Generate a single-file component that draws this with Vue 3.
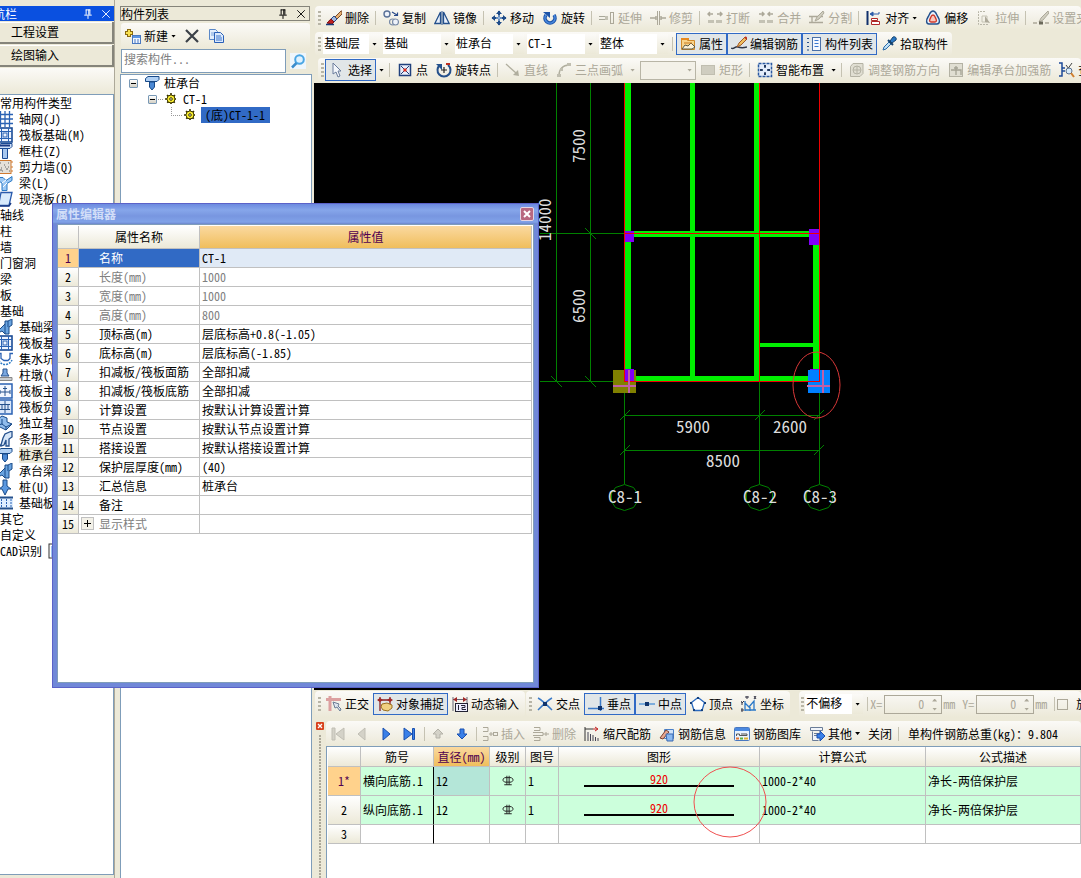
<script setup>
import { ref } from 'vue'

const icons = {
  brush: '<path d="M15 1 9 7l2 2 5-5V1z" fill="#e8b070" stroke="#7a4a2a"/><path d="M8 6 5 9l3 3 3-3z" fill="#9fb8e0" stroke="#2a4a8a"/><path d="M5 9c-2 1-2 3-4 4l5 1 2-2z" fill="#c02020" stroke="#801010"/><path d="M0 14.500h8" stroke="#1a3a7a" stroke-width="1.500"/>',
  copy: '<circle cx="4" cy="4" r="3" fill="#eef2fa" stroke="#5a7298" stroke-width="1.400"/><circle cx="9.500" cy="12" r="3" fill="none" stroke="#7a8ca8" stroke-width="1.200"/><circle cx="12.500" cy="12" r="3" fill="#eef2fa" stroke="#7a8ca8" stroke-width="1.200"/><path d="M9 2l5 3M14.500 2.500V5.500H11" stroke="#2a4a8a" fill="none" stroke-width="1.200"/>',
  mirror: '<path d="M6.500 2v11.500H.8zM9.500 2v11.500h5.700z" fill="#e8f0fc" stroke="#24508c" stroke-width="1.300"/><path d="M8 1v14" stroke="#24508c"/>',
  move: '<path d="M8 1v14M1 8h14" stroke="#1d4a88" stroke-width="2"/><path d="M5 4l3-3.500L11 4zM5 12l3 3.500 3-3.500zM4 5L.5 8 4 11zM12 5l3.500 3-3.500 3z" fill="#1d4a88"/><path d="M8 5v6M5 8h6" stroke="#b8d4f4"/>',
  rotate: '<path d="M4 5a5 5 0 1 0 8 0" fill="none" stroke="#1d54a8" stroke-width="3.600"/><path d="M4 5a5 5 0 1 0 8 0" fill="none" stroke="#4a8ae0" stroke-width="1.500"/><path d="M1 2h7v6z" fill="#1d54a8"/>',
  extend: '<path d="M0 6.500h6M0 9.500h6" stroke="#a8a89a" fill="none"/><rect x="6" y="6" width="3" height="4" fill="#c4c2b4"/><path d="M11.500 2v12M14.500 2v12M11 2.500h4M11 13.500h4" stroke="#aca899"/>',
  trim: '<path d="M7.500 1v14M9.500 1v14" stroke="#aca899"/><path d="M0 8h6M11 8h5M6 6v4M11 6v4" stroke="#aca899" stroke-width="1.500"/>',
  breakIcon: '<path d="M1 10h6v3H1zM9 10h6v3H9z" fill="#c4c2b4"/><path d="M6 4H1m2-2L1 4l2 2M10 4h5m-2-2 2 2-2 2" stroke="#aca899" fill="none" stroke-width="1.500"/>',
  merge: '<path d="M1 10h6v3H1zM9 10h6v3H9z" fill="#c4c2b4"/><path d="M1 4h5M4 2l2 2-2 2M15 4h-5m2-2-2 2 2 2" stroke="#aca899" fill="none" stroke-width="1.500"/>',
  split: '<path d="M0 6.500h14M0 12.500h14M3 6v6" stroke="#aca899" fill="none" stroke-width="1.300"/><path d="M14 1 8 7l-2 4 4-2 5-6z" fill="#d0cec0" stroke="#aca899"/>',
  align: '<path d="M1.500 1v14" stroke="#10306c" stroke-width="2"/><path d="M5 4h8m0 0V2M7 2 4 4l3 2z" stroke="#2c5caa" fill="#2c5caa"/><path d="M5.500 8.500h6v2h-6zM5.500 11.500h8v3h-8z" fill="#fff" stroke="#b02828"/>',
  offset: '<path d="M8 1c3 0 3 3 5 6s2 7-1 7H4c-3 0-3-4-1-7S5 1 8 1z" fill="#e4eefa" stroke="#24508c" stroke-width="1.400"/><path d="M8 5c2 0 2 2 3 4s0 3-1 3H6c-1 0-2-1-1-3s1-4 3-4z" fill="#f8c8c0" stroke="#d03a2a" stroke-width="1.400"/>',
  stretch: '<path d="M9 1.500H2.500v13H13" fill="none" stroke="#b8b6a8" stroke-dasharray="2 1"/><path d="M6 6h5v6H6z" fill="none" stroke="#c4c2b4"/><path d="M9 6l5 7-5-1z" fill="#aca899"/>',
  setPen: '<path d="M15 1 8 8l-2 4 4-2 6-7z" fill="#d0cec0" stroke="#aca899"/><path d="M0 13h4M12 13h4" stroke="#aca899" stroke-width="1.500"/><path d="M6 13h4" stroke="#6a685a" stroke-width="3"/>',
  props: '<path d="M1.500 2.500h5l1 2h7v9h-13z" fill="#f9d48a" stroke="#d08a2a"/><path d="M1 3h8" stroke="#e88a20" stroke-width="2"/><path d="M2 13l3-4 3 1 3-3 4 4-3 2z" fill="#fdf2d8" stroke="#5a5a48"/><path d="M4 7h8" stroke="#c87a20"/>',
  editBar: '<path d="M0 12c3 2 4-2 7-1s5 1 9 0" fill="none" stroke="#303848" stroke-width="1.500"/><path d="M14 1 8 7l-2 4 4-2 6-6z" fill="#f0c060" stroke="#a05a28"/><path d="M14 1l2 2" stroke="#c03020" stroke-width="2"/>',
  listPanel: '<path d="M1 2.500h3M1 6.500h3M1 10.500h3M1 14h3" stroke="#28508c" stroke-dasharray="2 1"/><rect x="6.500" y="1.500" width="8" height="13" fill="#f4f8ff" stroke="#4a70a8"/><path d="M8.500 4.500h4M8.500 7.500h4M8.500 10.500h4" stroke="#3a78d0"/>',
  picker: '<path d="M2 14 3 11 8 6l2 2-5 5z" fill="#bfe0f6" stroke="#2a6aa8"/><path d="M7 4l5 5" stroke="#14406c" stroke-width="2"/><path d="M9 5l3-4c2-1 4 1 3 3l-4 3z" fill="#2a78c4" stroke="#14406c"/>',
  cursor: '<path d="M4 1v11l3-2 2 5 2-1-2-5h3z" fill="#f4f7fc" stroke="#6a7c9c"/>',
  point: '<path d="M2.500 2.500h11v11h-11z" fill="#e8eefa" stroke="#20407c" stroke-width="1.500"/><path d="M4 4l8 8M12 4l-8 8" stroke="#203c78"/><path d="M6.500 6.500h3v3h-3z" fill="#e03020"/>',
  rotPoint: '<path d="M4 3a6.500 6.500 0 1 0 8 0" fill="none" stroke="#24508c" stroke-width="2"/><path d="M0 2h6v6z" fill="#24508c"/><path d="M8 5v6M5 8h6" stroke="#222" stroke-width="1.200"/><path d="M10 2h4" stroke="#c03020" stroke-width="2"/>',
  line: '<path d="M1 2l10 9" stroke="#b0ae9e" stroke-width="1.300"/><path d="M14 14l-6-1 5-5z" fill="#b0ae9e"/>',
  arc: '<path d="M3 13C3 7 7 3 13 3" fill="none" stroke="#b0ae9e" stroke-width="1.300"/><path d="M1 12h4v3H1zM4 6h3v3H4zM11 1h4v3h-4z" fill="#c0beb0"/>',
  rect: '<rect x="1.500" y="3.500" width="13" height="9" fill="#cfcdc0" stroke="#c0beb0"/>',
  smart: '<rect x="1.500" y="1.500" width="13" height="13" fill="#e4edfa" stroke="#2a58a0" stroke-width="1.500" stroke-dasharray="3 1"/><path d="M8 3v3M8 10v3M3 8h3M10 8h3M7 4h2M7 12h2M4 7v2M12 7v2" stroke="#102850" stroke-width="1.300"/>',
  adjust: '<path d="M1.500 4.500 4 1.500h10v10l-3 3h-9.500z" fill="#e0ded2" stroke="#b4b2a4"/><circle cx="8" cy="8" r="4" fill="none" stroke="#b4b2a4"/><path d="M8 4v8M4 8h8" stroke="#b4b2a4"/>',
  capBar: '<rect x="1.500" y="1.500" width="13" height="13" fill="#e0ded2" stroke="#b4b2a4"/><path d="M3 8h10v5M8 4v9M6 6h4" fill="none" stroke="#a4a294" stroke-width="1.300"/>',
  inspect: '<path d="M0 1h3v5h3M0 14h3V9h3M3 6v3" fill="none" stroke="#1d4a98" stroke-width="1.500"/><path d="M13 1 8 8M7 3l3 4" stroke="#444"/><circle cx="10" cy="9" r="3" fill="#d8ecfa" stroke="#5a7090"/><path d="M12 11l3 4" stroke="#d08030" stroke-width="2"/>',
  ortho: '<path d="M0 3.500h15M4 0v15" stroke="#dca0a0" stroke-width="3"/><path d="M7 6l2 6 2-1 3 4 1-2-3-3 1-2z" fill="#dfe6f0" stroke="#6a7c94"/>',
  snap: '<path d="M3 1v14M13 1v8M1 4h13" stroke="#8a2020" stroke-width="1.300"/><path d="M0 4l3-2 3 2-3 2zM10 4l3-2 3 2-3 2z" fill="#a02828"/><path d="M5 8l5-1 5 2v3l-4 3-5-1-2-3z" fill="#f0d080" stroke="#9a7020"/>',
  dynInput: '<path d="M1 1v14M15 1v6M1 3.500h14" stroke="#667"/><path d="M5 1v5L1 3.500zM11 1v5l4-2.500z" fill="#a02828"/><rect x="3.500" y="7.500" width="12" height="8" fill="#eef" stroke="#223"/><path d="M6.500 9v5M9 9.500h4v2h-3v2h4" fill="none" stroke="#223"/>',
  cross: '<path d="M1 2c4 2 10 8 14 12M15 2C11 4 5 10 1 14" fill="none" stroke="#3a7ac8" stroke-width="1.500"/><rect x="6" y="6" width="4" height="4" fill="#10346c"/>',
  perp: '<path d="M12.500 1v14M0 12.500h16" stroke="#3a7ac8" stroke-width="1.500"/><rect x="10" y="10" width="4" height="4" fill="#10346c"/>',
  mid: '<path d="M0 8h16" stroke="#5a9ad8" stroke-width="1.600"/><rect x="6" y="6" width="4" height="4" fill="#10346c"/>',
  vertex: '<path d="M8 1.500l6.500 5-2.500 8H4L1.500 6.500z" fill="#fff" stroke="#2a6ac0" stroke-width="1.300"/><path d="M7 1h2v2H7zM0 6h2v2H0zM14 6h2v2h-2zM3 13h2v2H3zM11 13h2v2h-2z" fill="#14407c"/>',
  coord: '<path d="M4 5v10M4 14h11M4 7l4 4 5-6v9M9 11v4" fill="none" stroke="#2a78c8" stroke-width="1.300"/><path d="M5 0h2v2H5zM13 0l2 3m0-3-2 3M0 5l1 2 2-2M1 7v2M0 13h2v2H0z" stroke="#334" fill="none"/>',
  first: '<path d="M2 2h3v12H2zM14 2v12L6 8z" fill="#d4d2c8" stroke="#c0beb4"/>',
  prev: '<path d="M11 2v12L4 8z" fill="#d4d2c8" stroke="#c0beb4"/>',
  next: '<path d="M5 2v12l7-6z" fill="#3a80e8" stroke="#1a50b0"/>',
  last: '<path d="M2 2v12l8-6z" fill="#3a80e8" stroke="#1a50b0"/><path d="M10.500 2.500h2v11h-2z" fill="#3a80e8" stroke="#1a50b0"/>',
  up: '<path d="M8 3 3 8h3v4h4V8h3z" fill="#d4d2c8" stroke="#b4b2a8"/>',
  down: '<path d="M8 13 3 8h3V3h4v5h3z" fill="#3a80e8" stroke="#1a50b0"/>',
  insertRow: '<path d="M1 1.500h5v4H1M1 10.500h5v4H1M7 8h4M9 6v4" fill="none" stroke="#aca899"/><rect x="11.500" y="6.500" width="4" height="3" fill="none" stroke="#aca899"/>',
  deleteRow: '<path d="M1 1.500h6v3H1M1 11.500h6v3H1M0 6.500h10v3H0M10 8h6M13 6v4" fill="none" stroke="#aca899"/>',
  scale: '<path d="M1 1v14M1 3h8" stroke="#333"/><path d="M9 3h4m-2-2 3 2-3 2" stroke="#c02020" fill="none"/><path d="M4 6v9M6.500 8v7M9 9v6M11.500 11v4M14 12v3" stroke="#445"/>',
  info: '<path d="M5.500 3.500h9v9h-9z" fill="#cfe2fa" stroke="#4a80c8"/><path d="M1 12l6-8 3 2-6 7z" fill="#e8a890" stroke="#7a4030"/><path d="M7 8h7v7H8z" fill="#8ab8f0" stroke="#3a68b0"/>',
  library: '<rect x=".5" y="1.500" width="15" height="13" rx="1" fill="#eaf2fd" stroke="#4a78c0"/><path d="M1 3.500h14" stroke="#4a88e0" stroke-width="3"/><path d="M2.500 10V8h3v1.500H13V8H7" fill="none" stroke="#555"/><path d="M2 12.500h3" stroke="#e07030" stroke-width="2"/><path d="M6 12.500h3" stroke="#58b048" stroke-width="2"/><path d="M10 12.500h4" stroke="#e0b030" stroke-width="2"/>',
  other: '<path d="M1.500 1.500h12v3h-12zM3.500 5.500v9h6M5 7.500h6M5 9.500h3" fill="#f0f4fa" stroke="#6a7c98"/><path d="M8 8h3V5l5 5-5 5v-3H8z" fill="#3a80e8" stroke="#1a50b0"/>',
  create: '<path d="M4 1v8M0 5h8" stroke="#8a6a10" stroke-width="4"/><path d="M4 2v6M1 5h6" stroke="#f8e050" stroke-width="2"/><rect x="7.500" y="7.500" width="8" height="8" fill="#eef5ff" stroke="#4a78c0"/><path d="M8 9h7" stroke="#5a94e4" stroke-width="2"/><path d="M9 12h2M12 12h2M9 14h2M12 14h2" stroke="#4a78c0"/>',
  remove: '<path d="M2 2l12 12M14 2 2 14" stroke="#3c4148" stroke-width="2.200"/>',
  duplicate: '<path d="M1.500 1.500h6l2 2v8h-8z" fill="#e4eefc" stroke="#5a88c8"/><path d="M3 5h4M3 7h4" stroke="#7aa4dc"/><path d="M6.500 4.500h6l3 3v7h-9z" fill="#dbe9fc" stroke="#2a60b8"/><path d="M8 8h5M8 10h6M8 12h6" stroke="#3a74cc"/>',
  search: '<rect width="16" height="16" fill="#eef6fc"/><circle cx="9.500" cy="6.500" r="4.300" fill="#dff2ff" stroke="#4aa6e4" stroke-width="2"/><path d="M6.500 10 2 14.500" stroke="#3a8ccc" stroke-width="2.500"/>',
  pin: '<path d="M5 2.500h6M5.500 2v7M9 2v7M10.500 2v7M3 9.500h10M8 10v4.500" stroke="currentColor" stroke-width="1.300" fill="none"/>',
  close: '<path d="M3 3l10 10M13 3 3 13" stroke="currentColor" stroke-width="1.200"/>',
  grid: '<path d="M0 3.500h16M0 8h16M0 12.500h16M3.500 0v16M8 0v16M12.500 0v16" stroke="#2a62b4" stroke-width="1.300"/>',
  raft: '<rect x="1" y="1" width="14" height="14" fill="#eef4ff" stroke="#1a4a94" stroke-width="1.600"/><path d="M1 4.500h14M1 11.500h14M4.500 1v14M11.500 1v14" stroke="#2a62b4"/><rect x="6" y="6" width="4" height="4" fill="none" stroke="#2a62b4"/>',
  column: '<path d="M1.500 2.500 4 .5h11v3L13 5.500H1.500z" fill="#cfe0f8" stroke="#1a4a94"/><path d="M5.500 5.500h5v10h-5z" fill="#a8c8f0" stroke="#1a4a94"/><path d="M1 2.500h12" stroke="#1a3a84" stroke-width="2"/>',
  wall: '<rect x="1" y="1.500" width="13" height="13" fill="#e4e0d8" stroke="#d07a30"/><path d="M3 4h1M7 6h1M11 4h1M4 9h1M9 10h2M5 12h1M12 12h1M8 8h1M3 11h2M11 8h1" stroke="#666"/><path d="M14 3h2M14 8h2M14 12h2" stroke="#d07a30"/>',
  beam: '<path d="M0 2.500h6l3 3 6-4v4l-5 3v7H5V8L0 5z" fill="#9cc8f4" stroke="#2a78c4"/><path d="M5 8l4-3M6 12l4-4" stroke="#fff"/>',
  slab: '<path d="M4 1.500h11l-3 13H1.500z" fill="#d8eafc" stroke="#2a5aac" stroke-width="1.300"/><path d="M1 15h11l2-3" stroke="#1a3a84" fill="none" stroke-width="1.500"/>',
  baseBeam: '<path d="M1 12 8 5V2h3l4-2v6l-3 2v7H8l-3-3-4 2z" fill="#6aa4e0" stroke="#184a88"/><path d="M8 5v10M11 2v6" stroke="#184a88"/>',
  pit: '<path d="M0 2.500h4v5l3 2h4l2-2v-5h3" fill="none" stroke="#2a62b4" stroke-width="1.300"/><path d="M2 9c2 6 10 6 13 0" fill="none" stroke="#2a78c4" stroke-dasharray="2 1" stroke-width="1.500"/>',
  pier: '<path d="M6 2h4v4l2 3H4l2-3z" fill="#7aa8e0" stroke="#24508c"/><path d="M1 10.500h14v3H1z" fill="#c8ccd0" stroke="#888"/>',
  mainBar: '<rect x="1" y="1" width="14" height="14" fill="#f2f7ff" stroke="#2a62b4" stroke-width="1.500"/><path d="M8 3v10M3 9h10M3 7v4M13 7v4M6 5.500h4" fill="none" stroke="#24508c"/>',
  negBar: '<rect x="1" y="1" width="14" height="14" fill="#dce8fa" stroke="#2a62b4" stroke-width="1.500"/><path d="M8 2v12M3 5.500h10M3 10.500h10M5 5v6M11 5v6" stroke="#24508c"/>',
  footing: '<path d="M1 4l4-3 5 2v4l5 2-6 6-8-4z" fill="#90bcec" stroke="#184a88"/><path d="M5 4v5l4 3 6-3M9 12v3M5 9l-4 1" fill="none" stroke="#184a88"/>',
  strip: '<path d="M0 14h4l2-7 2-4 7-3v6l-3 2v7H9V9L7 14l-3 1z" fill="#d6e6f8" stroke="#24508c" stroke-width="1.300"/>',
  cap: '<path d="M1.500 3.500 4 1.500h11v3l-2 2H1.500z" fill="#b0d0f4" stroke="#184a88"/><path d="M5.500 7v5L8 15l2.500-3V7z" fill="#4a88d4" stroke="#184a88"/>',
  pile: '<path d="M6 1h4v6l4 3h-3l-3 6-3-6H2l4-3z" fill="#5a98e0" stroke="#184a88"/>',
  baseSlab: '<rect x="0" y="3" width="16" height="10" fill="#dfeeff"/><path d="M0 2.500h16M0 13.500h16" stroke="#24508c" stroke-width="2"/><path d="M4.500 4v8M9.500 4v8M14 4v8" stroke="#2a62b4" stroke-dasharray="2 1"/>',
  gear: '<circle cx="8" cy="8" r="4" fill="#f4e020" stroke="#3a3400"/><path d="M8 2v12M2 8h12M4 4l8 8M12 4l-8 8" stroke="#3a3400" stroke-width="1.600" stroke-dasharray="2 1"/><circle cx="8" cy="8" r="3.300" fill="#f8ec30"/><circle cx="8" cy="8" r="1.300" fill="#fff" stroke="#3a3400"/>',
  sheet: '<rect x="1" y="1" width="14" height="14" fill="#fff" stroke="#333"/><path d="M4 4h10M4 7h10M4 10h10M4 13h10M4 3v11" stroke="#3a88e0"/>',
  rebar: '<path d="M3.500 3.500h9l2 2v2l-2 2h-9l-2-2v-2zM6.500 1v12M9.500 1v12M3 13h10" fill="none" stroke="#222" stroke-width="1.300"/>',
}

const sep = { sep: true }

const editTools = [
  { icon: 'brush', text: '删除' }, sep,
  { icon: 'copy', text: '复制' },
  { icon: 'mirror', text: '镜像' }, sep,
  { icon: 'move', text: '移动' },
  { icon: 'rotate', text: '旋转' }, sep,
  { icon: 'extend', text: '延伸', disabled: true },
  { icon: 'trim', text: '修剪', disabled: true }, sep,
  { icon: 'breakIcon', text: '打断', disabled: true },
  { icon: 'merge', text: '合并', disabled: true },
  { icon: 'split', text: '分割', disabled: true }, sep,
  { icon: 'align', text: '对齐', arrow: true },
  { icon: 'offset', text: '偏移' },
  { icon: 'stretch', text: '拉伸', disabled: true }, sep,
  { icon: 'setPen', text: '设置夹', disabled: true },
]

const combos = ['基础层', '基础', '桩承台', 'CT-1', '整体']

const viewTools = [
  { icon: 'props', text: '属性', active: true },
  { icon: 'editBar', text: '编辑钢筋', active: true },
  { icon: 'listPanel', text: '构件列表', active: true },
  { icon: 'picker', text: '拾取构件' },
]

const drawTools = [
  { icon: 'cursor', text: '选择', active: true, arrow: true }, sep,
  { icon: 'point', text: '点' },
  { icon: 'rotPoint', text: '旋转点' }, sep,
  { icon: 'line', text: '直线', disabled: true },
  { icon: 'arc', text: '三点画弧', disabled: true, arrow: true },
  { combo: true },
  { icon: 'rect', text: '矩形', disabled: true }, sep,
  { icon: 'smart', text: '智能布置', arrow: true }, sep,
  { icon: 'adjust', text: '调整钢筋方向', disabled: true },
  { icon: 'capBar', text: '编辑承台加强筋', disabled: true },
  { icon: 'inspect', text: '查' },
]

const snapTools = [
  { icon: 'ortho', text: '正交' },
  { icon: 'snap', text: '对象捕捉', active: true },
  { icon: 'dynInput', text: '动态输入' },
]

const pointTools = [
  { icon: 'cross', text: '交点' },
  { icon: 'perp', text: '垂点', active: true },
  { icon: 'mid', text: '中点', active: true },
  { icon: 'vertex', text: '顶点' },
  { icon: 'coord', text: '坐标' },
]

const rebarTools = [
  { icon: 'first', label: '首行', disabled: true },
  { icon: 'prev', label: '上一行', disabled: true },
  { icon: 'next', label: '下一行' },
  { icon: 'last', label: '末行' }, sep,
  { icon: 'up', label: '上移', disabled: true },
  { icon: 'down', label: '下移' }, sep,
  { icon: 'insertRow', text: '插入', disabled: true },
  { icon: 'deleteRow', text: '删除', disabled: true },
  { icon: 'scale', text: '缩尺配筋' },
  { icon: 'info', text: '钢筋信息' },
  { icon: 'library', text: '钢筋图库' },
  { icon: 'other', text: '其他', arrow: true },
  { text: '关闭' }, sep,
]

const navItems = [
  { text: '常用构件类型' },
  { icon: 'grid', text: '轴网(J)' },
  { icon: 'raft', text: '筏板基础(M)' },
  { icon: 'column', text: '框柱(Z)' },
  { icon: 'wall', text: '剪力墙(Q)' },
  { icon: 'beam', text: '梁(L)' },
  { icon: 'slab', text: '现浇板(B)' },
  { text: '轴线' },
  { text: '柱' },
  { text: '墙' },
  { text: '门窗洞' },
  { text: '梁' },
  { text: '板' },
  { text: '基础' },
  { icon: 'baseBeam', text: '基础梁' },
  { icon: 'raft', text: '筏板基' },
  { icon: 'pit', text: '集水坑' },
  { icon: 'pier', text: '柱墩(Y' },
  { icon: 'mainBar', text: '筏板主' },
  { icon: 'negBar', text: '筏板负' },
  { icon: 'footing', text: '独立基' },
  { icon: 'strip', text: '条形基' },
  { icon: 'cap', text: '桩承台', current: true },
  { icon: 'baseBeam', text: '承台梁' },
  { icon: 'pile', text: '桩(U)' },
  { icon: 'baseSlab', text: '基础板' },
  { text: '其它' },
  { text: '自定义' },
  { text: 'CAD识别', tail: 'sheet' },
]

const properties = [
  { name: '名称', value: 'CT-1' },
  { name: '长度(mm)', value: '1000', muted: true },
  { name: '宽度(mm)', value: '1000', muted: true },
  { name: '高度(mm)', value: '800', muted: true },
  { name: '顶标高(m)', value: '层底标高+0.8(-1.05)' },
  { name: '底标高(m)', value: '层底标高(-1.85)' },
  { name: '扣减板/筏板面筋', value: '全部扣减' },
  { name: '扣减板/筏板底筋', value: '全部扣减' },
  { name: '计算设置', value: '按默认计算设置计算' },
  { name: '节点设置', value: '按默认节点设置计算' },
  { name: '搭接设置', value: '按默认搭接设置计算' },
  { name: '保护层厚度(mm)', value: '(40)' },
  { name: '汇总信息', value: '桩承台' },
  { name: '备注', value: '' },
  { name: '显示样式', value: '', muted: true, expandable: true },
]

const bars = [
  { no: '1*', name: '横向底筋.1', size: '12', shape: '920', formula: '1000-2*40', note: '净长-两倍保护层' },
  { no: '2', name: '纵向底筋.1', size: '12', shape: '920', formula: '1000-2*40', note: '净长-两倍保护层' },
]

const axes = [
  { x: 624, label: 'C8-1' },
  { x: 759, label: 'C8-2' },
  { x: 819, label: 'C8-3' },
]

const keyword = ref('')
const selectedRow = ref(0)
const rotateOn = ref(false)
</script>

<template>
  <div class="app">
    <aside class="nav">
      <header class="caption caption--active">
        <span class="caption__clip">航栏</span>
        <button type="button" aria-label="固定"><svg class="icon icon--small" viewBox="0 0 16 16" v-html="icons.pin" /></button>
        <button type="button" aria-label="关闭"><svg class="icon icon--small" viewBox="0 0 16 16" v-html="icons.close" /></button>
      </header>
      <button type="button" class="nav__tab">工程设置</button>
      <button type="button" class="nav__tab">绘图输入</button>
      <div class="nav__strip"></div>
      <ul class="nav__list">
        <li v-for="(item, index) in navItems" :key="index" :class="{ 'has-icon': item.icon }">
          <svg v-if="item.icon" class="icon" viewBox="0 0 16 16" v-html="icons[item.icon]" />
          <span :class="{ current: item.current }">{{ item.text }}</span>
          <svg v-if="item.tail" class="icon" viewBox="0 0 16 16" v-html="icons[item.tail]" />
        </li>
      </ul>
    </aside>

    <aside class="parts">
      <header class="caption">
        <span class="caption__text">构件列表</span>
        <button type="button" aria-label="固定"><svg class="icon icon--small" viewBox="0 0 16 16" v-html="icons.pin" /></button>
        <button type="button" aria-label="关闭"><svg class="icon icon--small" viewBox="0 0 16 16" v-html="icons.close" /></button>
      </header>
      <div class="parts__tools">
        <button type="button" class="tool">
          <svg class="icon" viewBox="0 0 16 16" v-html="icons.create" />新建<i class="caret"></i>
        </button>
        <button type="button" class="tool" aria-label="删除"><svg class="icon" viewBox="0 0 16 16" v-html="icons.remove" /></button>
        <button type="button" class="tool" aria-label="复制"><svg class="icon" viewBox="0 0 16 16" v-html="icons.duplicate" /></button>
      </div>
      <div class="search">
        <input v-model="keyword" type="text" placeholder="搜索构件..." aria-label="搜索构件" />
        <button type="button" aria-label="搜索"><svg class="icon" viewBox="0 0 16 16" v-html="icons.search" /></button>
      </div>
      <ul class="tree">
        <li class="tree__row tree__row--root">
          <i class="toggle"></i><svg class="icon" viewBox="0 0 16 16" v-html="icons.cap" /><span>桩承台</span>
        </li>
        <li class="tree__row tree__row--child">
          <i class="toggle"></i><i class="branch"></i><svg class="icon" viewBox="0 0 16 16" v-html="icons.gear" /><span>CT-1</span>
        </li>
        <li class="tree__row tree__row--leaf">
          <i class="branch branch--corner"></i><svg class="icon" viewBox="0 0 16 16" v-html="icons.gear" /><span class="picked">(底)CT-1-1</span>
        </li>
      </ul>
    </aside>

    <main class="work">
      <div class="bar bar--edit">
        <i class="grip"></i>
        <template v-for="(t, i) in editTools" :key="i">
          <i v-if="t.sep" class="sep"></i>
          <button v-else type="button" class="tool" :disabled="t.disabled">
            <svg class="icon" viewBox="0 0 16 16" v-html="icons[t.icon]" />{{ t.text }}<i v-if="t.arrow" class="caret"></i>
          </button>
        </template>
      </div>

      <div class="bar bar--view">
        <i class="grip"></i>
        <div class="combos">
          <label v-for="c in combos" :key="c" class="combo">
            <select :aria-label="c"><option>{{ c }}</option></select>
            <span class="combo__arrow"><i class="caret"></i></span>
          </label>
        </div>
        <i class="sep"></i>
        <button v-for="t in viewTools" :key="t.text" type="button" class="tool" :class="{ 'tool--on': t.active }">
          <svg class="icon" viewBox="0 0 16 16" v-html="icons[t.icon]" />{{ t.text }}
        </button>
      </div>

      <div class="bar bar--draw">
        <i class="grip"></i>
        <template v-for="(t, i) in drawTools" :key="i">
          <i v-if="t.sep" class="sep"></i>
          <label v-else-if="t.combo" class="combo combo--off">
            <select disabled aria-label="弧类型"><option></option></select>
            <span class="combo__arrow"><i class="caret"></i></span>
          </label>
          <template v-else>
            <button type="button" class="tool" :class="{ 'tool--on': t.active }" :disabled="t.disabled">
              <svg class="icon" viewBox="0 0 16 16" v-html="icons[t.icon]" />{{ t.text }}
            </button>
            <button v-if="t.arrow" type="button" class="drop" :disabled="t.disabled" aria-label="更多"><i class="caret"></i></button>
          </template>
        </template>
      </div>

      <div class="canvas">
        <svg class="plan" aria-label="基础平面图">
          <g transform="translate(-314 -83)">
            <g fill="#00f000">
              <path d="M625 83h6v295h-6zM690 83h5v294h-5zM754 83h5v294h-5zM634 231h176v6H634zM634 376h174v5H634zM813 245h6v126h-6zM760 343h54v4h-54z" />
            </g>
            <g fill="none" stroke="#008000">
              <path d="M556.500 83v299M590.500 83v299M540 233.500h85M540 381.500h85M624.500 382v102M759.500 382v102M819.500 382v102M624 415.500h196M624 450.500h196" />
              <path d="M585 228l11 11M551 376l11 11M585 376l11 11M620 420l10-10M755 420l10-10M814 420l10-10M620 455l10-10M814 455l10-10" />
              <polygon
                v-for="a in axes"
                :key="a.label"
                points="0,-13 9,-10 13,-4 13,4 9,10 0,13 -9,10 -13,4 -13,-4 -9,-10"
                :transform="`translate(${a.x + 0.5} 497.5)`"
              />
            </g>
            <path d="M625 231h9v11h-9zM809 229h11v16h-11zM810 369h10v5h-10z" fill="#8000f8" />
            <path d="M613 370h23v23h-23z" fill="#808000" />
            <path d="M625 369h9v13h-9z" fill="#8000f8" />
            <path d="M808 370h22v23h-22z" fill="#0080ff" />
            <path d="M624.500 83v298.500M759.500 83v298.500M819.500 83v298.500M624 233.500h195M624 381.500h196" fill="none" stroke="#f00000" />
            <path d="M613 386h23M629 370v23M807 386h23M823 370v23" fill="none" stroke="#c060a8" stroke-width="2" />
            <ellipse cx="816.500" cy="385" rx="23.500" ry="33" fill="none" stroke="#d83838" />
            <g class="plan__text">
              <text x="676" y="433">5900</text>
              <text x="773" y="433">2600</text>
              <text x="706" y="467">8500</text>
              <text transform="translate(585 163) rotate(-90)">7500</text>
              <text transform="translate(585 323) rotate(-90)">6500</text>
              <text transform="translate(551 241) rotate(-90)">14000</text>
              <text v-for="a in axes" :key="a.label" :x="a.x - 16" y="503">{{ a.label }}</text>
            </g>
          </g>
        </svg>
      </div>

      <div class="bars">
        <div class="bar bar--snap">
          <i class="grip"></i>
          <button v-for="t in snapTools" :key="t.text" type="button" class="tool" :class="{ 'tool--on': t.active }">
            <svg class="icon" viewBox="0 0 16 16" v-html="icons[t.icon]" />{{ t.text }}
          </button>
        </div>
        <div class="bar bar--snap">
          <i class="grip"></i>
          <button v-for="t in pointTools" :key="t.text" type="button" class="tool" :class="{ 'tool--on': t.active }">
            <svg class="icon" viewBox="0 0 16 16" v-html="icons[t.icon]" />{{ t.text }}
          </button>
        </div>
        <div class="bar bar--snap bar--offset">
          <i class="grip"></i>
          <label class="combo">
            <select aria-label="偏移方式"><option>不偏移</option></select>
            <span class="combo__arrow"><i class="caret"></i></span>
          </label>
          <i class="sep"></i>
          <label class="spin">X=<span class="spin__box"><input type="text" value="0" disabled /><span class="spin__arrows"></span></span>mm</label>
          <label class="spin">Y=<span class="spin__box"><input type="text" value="0" disabled /><span class="spin__arrows"></span></span>mm</label>
          <i class="sep"></i>
          <label class="check"><input v-model="rotateOn" type="checkbox" />旋</label>
        </div>
      </div>

      <section class="dock">
        <div class="dock__side">
          <button type="button" class="dock__close" aria-label="关闭"><svg viewBox="0 0 8 8"><path d="M2 2l4 4M6 2 2 6" stroke="#fff" stroke-width="1.300" /></svg></button>
          <i class="dock__grip"></i>
        </div>
        <div class="dock__body">
          <div class="bar bar--rebar">
            <template v-for="(t, i) in rebarTools" :key="i">
              <i v-if="t.sep" class="sep"></i>
              <button v-else type="button" class="tool" :aria-label="t.text || t.label" :disabled="t.disabled">
                <svg v-if="t.icon" class="icon" viewBox="0 0 16 16" v-html="icons[t.icon]" />{{ t.text }}<i v-if="t.arrow" class="caret"></i>
              </button>
            </template>
            <span class="total">单构件钢筋总重(kg)：9.804</span>
          </div>
          <div class="sheet">
            <table class="rebar">
              <colgroup>
                <col class="c-no" /><col class="c-name" /><col class="c-size" /><col class="c-grade" />
                <col class="c-pic" /><col class="c-shape" /><col class="c-formula" /><col />
              </colgroup>
              <thead>
                <tr>
                  <th></th><th>筋号</th><th class="hot">直径(mm)</th><th>级别</th><th>图号</th><th>图形</th><th>计算公式</th><th>公式描述</th>
                </tr>
              </thead>
              <tbody>
                <tr v-for="(bar, i) in bars" :key="bar.no" class="filled">
                  <th :class="{ here: i === 0 }">{{ bar.no }}</th>
                  <td class="name">{{ bar.name }}</td>
                  <td :class="{ focus: i === 0 }">{{ bar.size }}</td>
                  <td class="grade"><svg viewBox="0 0 16 16" v-html="icons.rebar" /></td>
                  <td>1</td>
                  <td class="shape"><span>{{ bar.shape }}</span></td>
                  <td>{{ bar.formula }}</td>
                  <td>{{ bar.note }}</td>
                </tr>
                <tr>
                  <th>3</th><td class="name"></td><td></td><td></td><td></td><td></td><td></td><td></td>
                </tr>
              </tbody>
            </table>
            <svg class="mark" viewBox="0 0 74 72"><ellipse cx="37" cy="36" rx="36" ry="35" fill="none" stroke="#f05050" /></svg>
          </div>
        </div>
      </section>
    </main>

    <section class="editor" role="dialog" aria-label="属性编辑器">
      <header class="editor__title">
        <h2>属性编辑器</h2>
        <button type="button" aria-label="关闭"><svg viewBox="0 0 12 12"><path d="M3 3l6 6M9 3 3 9" stroke="#fff" stroke-width="2" /></svg></button>
      </header>
      <div class="editor__body">
        <table class="props">
          <colgroup><col class="p-no" /><col class="p-name" /><col /></colgroup>
          <thead>
            <tr><th></th><th>属性名称</th><th class="hot">属性值</th></tr>
          </thead>
          <tbody>
            <tr
              v-for="(p, i) in properties"
              :key="p.name"
              :class="{ picked: selectedRow === i, muted: p.muted }"
              @click="selectedRow = i"
            >
              <th>{{ i + 1 }}</th>
              <td class="pname"><button v-if="p.expandable" type="button" class="plus" aria-label="展开"></button>{{ p.name }}</td>
              <td>{{ p.value }}</td>
            </tr>
          </tbody>
        </table>
      </div>
    </section>
  </div>
</template>

<style>
html,
body {
  margin: 0;
  background: #ece9d8;
}
</style>

<style scoped>
.app {
  position: relative;
  display: grid;
  grid-template-columns: 120px 194px minmax(0, 1fr);
  height: 100vh;
  overflow: hidden;
  background: #ece9d8;
  color: #000;
  font-family: "Noto Sans CJK SC", "Liberation Sans", sans-serif;
  font-size: 12px;
  font-feature-settings: "hwid";
  line-height: 16px;
  white-space: nowrap;
}

button,
input,
select {
  margin: 0;
  padding: 0;
  border: 0;
  border-radius: 0;
  background: none;
  color: inherit;
  font: inherit;
  font-feature-settings: inherit;
}

ul {
  margin: 0;
  padding: 0;
  list-style: none;
}

i {
  font-style: normal;
}

.icon {
  flex: none;
  display: block;
  width: 16px;
  height: 16px;
}

.icon--small {
  width: 12px;
  height: 12px;
}

.caret {
  flex: none;
  width: 5px;
  height: 3px;
  background: currentColor;
  clip-path: polygon(0 0, 100% 0, 50% 100%);
}

/* side panels */
.nav,
.parts {
  display: flex;
  flex-direction: column;
  min-width: 0;
  padding-top: 6px;
}

.nav {
  margin-right: 5px;
  padding-bottom: 3px;
  border-right: 1px solid #aca899;
}

.caption {
  box-sizing: border-box;
  flex: none;
  display: flex;
  align-items: center;
  gap: 6px;
  height: 15px;
  padding-right: 2px;
  border: 1px solid #85847a;
}

.caption--active {
  border-width: 1px 0;
  border-color: #0a50e0;
  background: #0a50e0;
  color: #fff;
}

.caption__clip {
  display: flex;
  justify-content: flex-end;
  width: 17px;
  margin-right: auto;
}

.caption__text {
  margin-right: auto;
}

.nav__tab {
  box-sizing: border-box;
  flex: none;
  height: 22px;
  margin-top: 1px;
  padding-left: 11px;
  border: solid #85847a;
  border-width: 0 2px 2px 0;
  box-shadow: inset 0 1px #fff;
  text-align: left;
}

.nav__strip {
  flex: none;
  height: 26px;
  margin-top: 1px;
  background: linear-gradient(#fbfaf7, #ece9d8);
}

.nav__list {
  flex: 1;
  overflow: hidden;
  border: 1px solid #7f9db9;
  border-left: 0;
  background: #fff;
}

.nav__list li {
  display: flex;
  align-items: center;
  gap: 6px;
  height: 16px;
}

.nav__list .has-icon {
  margin-left: -3px;
}

.current {
  padding-right: 20px;
  background: #ece9d8;
}

.parts {
  margin-right: 2px;
}

.parts .caption {
  margin-right: 2px;
}

.parts__tools {
  flex: none;
  display: flex;
  align-items: center;
  height: 26px;
  margin: 2px 2px 0 1px;
  border-radius: 3px;
  background: linear-gradient(#fbfaf7, #ece9d8);
}

.search {
  flex: none;
  display: flex;
  height: 24px;
  margin-left: 1px;
}

.search input {
  box-sizing: border-box;
  flex: 1;
  min-width: 0;
  padding: 0 2px 4px;
  border: 1px solid #7f9db9;
  background: #fff;
}

.search input::placeholder {
  color: #808080;
  opacity: 1;
}

.search button {
  padding: 0 6px 0 4px;
}

.tree {
  flex: 1;
  margin-top: 1px;
  border: 1px solid #7f9db9;
  border-bottom: 0;
  background: #fff;
}

.tree__row {
  display: flex;
  align-items: center;
  height: 16px;
}

.tree__row--root {
  padding-left: 8px;
}

.tree__row--root .icon {
  margin: 0 4px 0 6px;
}

.tree__row--child {
  padding-left: 27px;
}

.tree__row--child span {
  padding-left: 4px;
}

.tree__row--leaf {
  padding-left: 50px;
}

.tree__row--leaf .picked {
  margin-left: 3px;
  padding: 0 5px 0 4px;
  background: #316ac5;
}

.toggle {
  width: 7px;
  height: 7px;
  border: 1px solid #7898b5;
  border-radius: 1px;
  background: linear-gradient(#000, #000) center / 5px 1px no-repeat, linear-gradient(#fff, #d4d0c4);
}

.branch {
  width: 5px;
  border-top: 1px dotted #999;
  margin-left: 1px;
}

.branch--corner {
  width: 10px;
  height: 8px;
  align-self: flex-start;
  border-top: 0;
  border-bottom: 1px dotted #999;
  border-left: 1px dotted #999;
  margin: 0;
}

/* toolbars */
.work {
  display: flex;
  flex-direction: column;
  min-width: 0;
  overflow: hidden;
}

.bar {
  flex: none;
  display: flex;
  align-items: center;
  min-width: 0;
  height: 24px;
  padding-left: 3px;
  border-radius: 4px;
  background: linear-gradient(#fbfaf7, #f3f1e8 50%, #ece9d8);
  overflow: hidden;
}

.bar--edit {
  margin: 6px 0 0 1px;
}

.bar--view {
  align-self: flex-start;
  margin: 2px 0 0 1px;
}

.bar--draw {
  margin: 2px 0 1px 4px;
}

.grip {
  flex: none;
  width: 3px;
  height: 15px;
  margin-right: 1px;
  background: repeating-linear-gradient(#b8b5a6 0 2px, transparent 2px 4px);
}

.bar--view .grip {
  margin-right: 2px;
}

.sep {
  flex: none;
  width: 1px;
  height: 14px;
  margin: 0 3px 0 2px;
  background: #c5c2b2;
}

.tool {
  box-sizing: border-box;
  flex: none;
  display: flex;
  align-items: center;
  gap: 3px;
  height: 22px;
  padding: 0 4px;
}

.tool:disabled,
.drop:disabled {
  color: #aca899;
}

.tool--on {
  padding: 0 3px;
  border: 1px solid #316ac5;
  background: #e1e6e8;
}

.drop {
  flex: none;
  display: flex;
  align-items: center;
  justify-content: center;
  width: 11px;
  height: 22px;
}

.combos {
  display: flex;
  gap: 3px;
  margin-right: 2px;
}

.combo {
  flex: none;
  display: flex;
  width: 69px;
  height: 20px;
  background: #fff;
}

.combo:first-child {
  width: 57px;
}

.combo select {
  appearance: none;
  flex: 1;
  min-width: 0;
  padding: 0 0 2px 1px;
  outline: none;
}

.combo__arrow {
  display: flex;
  align-items: center;
  justify-content: center;
  width: 11px;
  background: linear-gradient(#fbfaf7, #ece9d8);
}

.combo--off {
  box-sizing: border-box;
  width: 56px;
  height: 19px;
  margin-left: 2px;
  border: 1px solid #b8b5a6;
  background: #f3f1e8;
  color: #aca899;
}

.combo--off .combo__arrow {
  background: none;
}

/* drawing area */
.canvas {
  flex: 1;
  min-height: 0;
  background: #000;
  overflow: hidden;
}

.plan {
  display: block;
  width: 100%;
  height: 100%;
}

.plan__text {
  fill: #dcdcdc;
  font-size: 17px;
}

/* lower area */
.bars {
  flex: none;
  display: flex;
  gap: 1px;
  padding: 1px 0 0 1px;
}

.bar--snap {
  height: 26px;
  padding-right: 2px;
}

.bar--offset {
  flex: 1;
  margin-left: 8px;
  padding-left: 2px;
}

.bar--offset .combo {
  width: 58px;
}

.bar--offset .sep {
  margin: 0 2px 0 4px;
}

.spin {
  flex: none;
  display: flex;
  align-items: center;
  gap: 1px;
  margin-right: 7px;
  color: #aca899;
}

.bar--offset .spin + .sep {
  margin: 0 2px 0 0;
}

.spin__box {
  box-sizing: border-box;
  display: flex;
  align-items: center;
  width: 58px;
  height: 19px;
  margin-left: 1px;
  border: 1px solid #aca899;
}

.spin__box input {
  flex: 1;
  min-width: 0;
  text-align: right;
}

.spin__arrows {
  position: relative;
  width: 17px;
  height: 17px;
}

.spin__arrows::before,
.spin__arrows::after {
  content: "";
  position: absolute;
  left: 8px;
  top: 3px;
  width: 5px;
  height: 3px;
  background: #aca899;
  clip-path: polygon(50% 0, 100% 100%, 0 100%);
}

.spin__arrows::after {
  top: 12px;
  clip-path: polygon(0 0, 100% 0, 50% 100%);
}

.check {
  flex: none;
  display: flex;
  align-items: center;
  gap: 8px;
}

.check input {
  appearance: none;
  box-sizing: border-box;
  width: 11px;
  height: 11px;
  border: 1px solid #aca899;
}

.check input:checked {
  background: #316ac5;
}

.dock {
  flex: none;
  display: flex;
  height: 157px;
  margin-top: 4px;
}

.dock__side {
  flex: none;
  display: flex;
  flex-direction: column;
  align-items: center;
  width: 12px;
}

.dock__close {
  flex: none;
  width: 8px;
  height: 8px;
  margin-top: 1px;
  border-radius: 1px;
  background: #d8401c;
}

.dock__close svg {
  display: block;
}

.dock__grip {
  flex: 1;
  width: 2px;
  margin-top: 5px;
  background: repeating-linear-gradient(#aca899 0 2px, transparent 2px 3px);
}

.dock__body {
  flex: 1;
  display: flex;
  flex-direction: column;
  min-width: 0;
}

.bar--rebar {
  flex: none;
  height: 25px;
  padding-left: 0;
}

.bar--rebar .sep {
  margin: 0 1px 0 2px;
}

.total {
  padding-left: 8px;
}

.sheet {
  position: relative;
  flex: 1;
  overflow: hidden;
  border: solid #7f9db9;
  border-width: 1px 0 0 1px;
  background: #fff;
}

table {
  width: 100%;
  table-layout: fixed;
  border-collapse: separate;
  border-spacing: 0;
}

th,
td {
  overflow: hidden;
  padding: 0;
  border: solid #c0c0c0;
  border-width: 0 1px 1px 0;
  text-align: left;
  font-weight: 400;
}

th {
  background: linear-gradient(#fff, #ece9d8);
  text-align: center;
}

.rebar {
  padding-left: 1px;
}

.c-no {
  width: 33px;
}

.c-name {
  width: 73px;
}

.c-size {
  width: 56px;
}

.c-grade {
  width: 36px;
}

.c-pic {
  width: 33px;
}

.c-shape {
  width: 201px;
}

.c-formula {
  width: 166px;
}

.rebar th,
.rebar td {
  height: 18px;
}

.rebar thead th {
  height: 19px;
}

.rebar td {
  padding-left: 2px;
}

.rebar .filled th,
.rebar .filled td {
  height: 28px;
}

.rebar .filled td {
  background: #ccffdc;
}

.rebar .filled .focus {
  background: #b4e6d8;
}

.rebar .name {
  border-right-color: #000;
}

.rebar .grade {
  padding-left: 0;
}

.rebar .grade svg {
  display: block;
  width: 12px;
  height: 12px;
  margin: 0 auto;
}

.rebar .shape {
  padding: 0;
  text-align: center;
}

.shape span {
  display: block;
  width: 150px;
  height: 10px;
  margin: 0 auto;
  border-bottom: 2px solid #000;
  color: #f00000;
  line-height: 8px;
}

.shape {
  line-height: 8px;
}

.rebar .hot,
.props .hot {
  background: linear-gradient(#fad9a0, #f0be5c);
  color: #500050;
}

.rebar .filled .here {
  background: #ffd28c;
  color: #500050;
}

.mark {
  position: absolute;
  left: 366px;
  top: 19px;
  width: 74px;
  height: 72px;
}

/* floating property window */
.editor {
  position: absolute;
  left: 52px;
  top: 203px;
  box-sizing: border-box;
  display: flex;
  flex-direction: column;
  width: 487px;
  height: 485px;
  padding: 0 4px 4px;
  border: 1px solid #5b62c8;
  background: #7088d8;
}

.editor__title {
  flex: none;
  display: flex;
  align-items: center;
  justify-content: space-between;
  height: 20px;
  margin: 0 -4px;
  padding: 0 4px 0 3px;
  background: linear-gradient(#6c8ae0, #86a6ea 30%, #7896e0 60%, #80a2e8 90%, #6c86cc);
}

.editor__title h2 {
  margin: 0;
  color: #d2def8;
  font-size: 12px;
  font-weight: 700;
}

.editor__title button {
  width: 12px;
  height: 12px;
  border: 1px solid #e4d4e4;
  border-radius: 2px;
  box-sizing: content-box;
  background: #b86880;
}

.editor__title svg {
  display: block;
}

.editor__body {
  flex: 1;
  min-height: 0;
  padding: 1px 1px 0 0;
  border: 1px solid #7f9db9;
  background: #fff;
}

.p-no {
  width: 21px;
}

.p-name {
  width: 121px;
}

.props th,
.props td {
  height: 18px;
}

.props thead th {
  height: 22px;
}

.props td {
  padding-left: 2px;
}

.props .pname {
  padding-left: 20px;
}

.props .muted td {
  color: #808080;
}

.props .picked th {
  background: #ffd28c;
  color: #500050;
}

.props .picked td {
  background: #e0eaf6;
}

.props .picked .pname {
  background: #316ac5;
  color: #fff;
}

.plus {
  float: left;
  box-sizing: border-box;
  width: 13px;
  height: 13px;
  margin: 1px 0 0 -18px;
  border: 1px solid #c0c0c0;
  background:
    linear-gradient(#000, #000) center / 7px 1px no-repeat,
    linear-gradient(#000, #000) center / 1px 7px no-repeat,
    #f3f1e8;
}
</style>
